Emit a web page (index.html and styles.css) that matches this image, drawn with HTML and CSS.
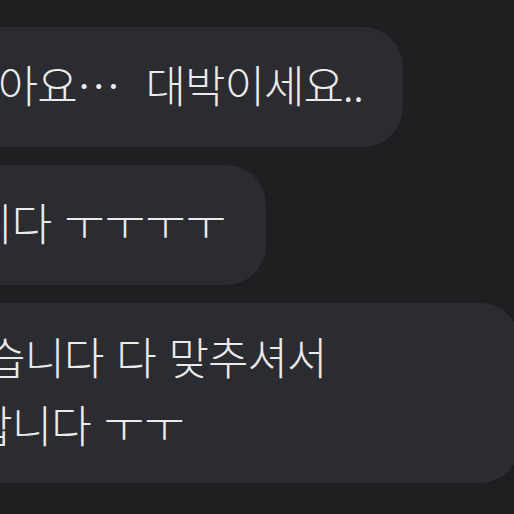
FILE: index.html
```html
<!DOCTYPE html>
<html lang="ko">
<head>
<meta charset="utf-8">
<link rel="stylesheet" href="styles.css">
</head>
<body>
<div class="chat">
  <div class="bubble"><p class="text">네 저도 참 좋아요…&nbsp; 대박이세요..</p></div>
  <div class="bubble"><p class="text">정말 감사합니다 <span class="cry">ㅜㅜㅜㅜ</span></p></div>
  <div class="bubble bubble-wide"><p class="text">네 정말 좋았습니다 다 맞추셔서<br>정말로 감사합니다 <span class="cry">ㅜㅜ</span></p></div>
</div>
</body>
</html>
```
FILE: styles.css
```css
html, body {
  margin: 0;
  padding: 0;
  background: #1f1f21;
  overflow: hidden;
  width: 514px;
  height: 514px;
}
.chat {
  display: flex;
  flex-direction: column;
  align-items: flex-start;
  gap: 18px;
  padding-top: 27px;
  margin-left: -278px;
}
.bubble {
  box-sizing: border-box;
  display: flex;
  align-items: center;
  min-height: 120px;
  background: #2a2c31;
  padding: 19px 40px 25px 40px;
  border-radius: 40px;
}
.bubble-wide {
  width: 798px;
}
.text {
  margin: 0;
  color: #ebebeb;
  font-family: "Noto Sans CJK KR", sans-serif;
  font-weight: 300;
  font-size: 44px;
  letter-spacing: -1px;
  word-spacing: 1.5px;
  line-height: 68px;
  white-space: nowrap;
}
.cry {
  letter-spacing: 0;
}
```
